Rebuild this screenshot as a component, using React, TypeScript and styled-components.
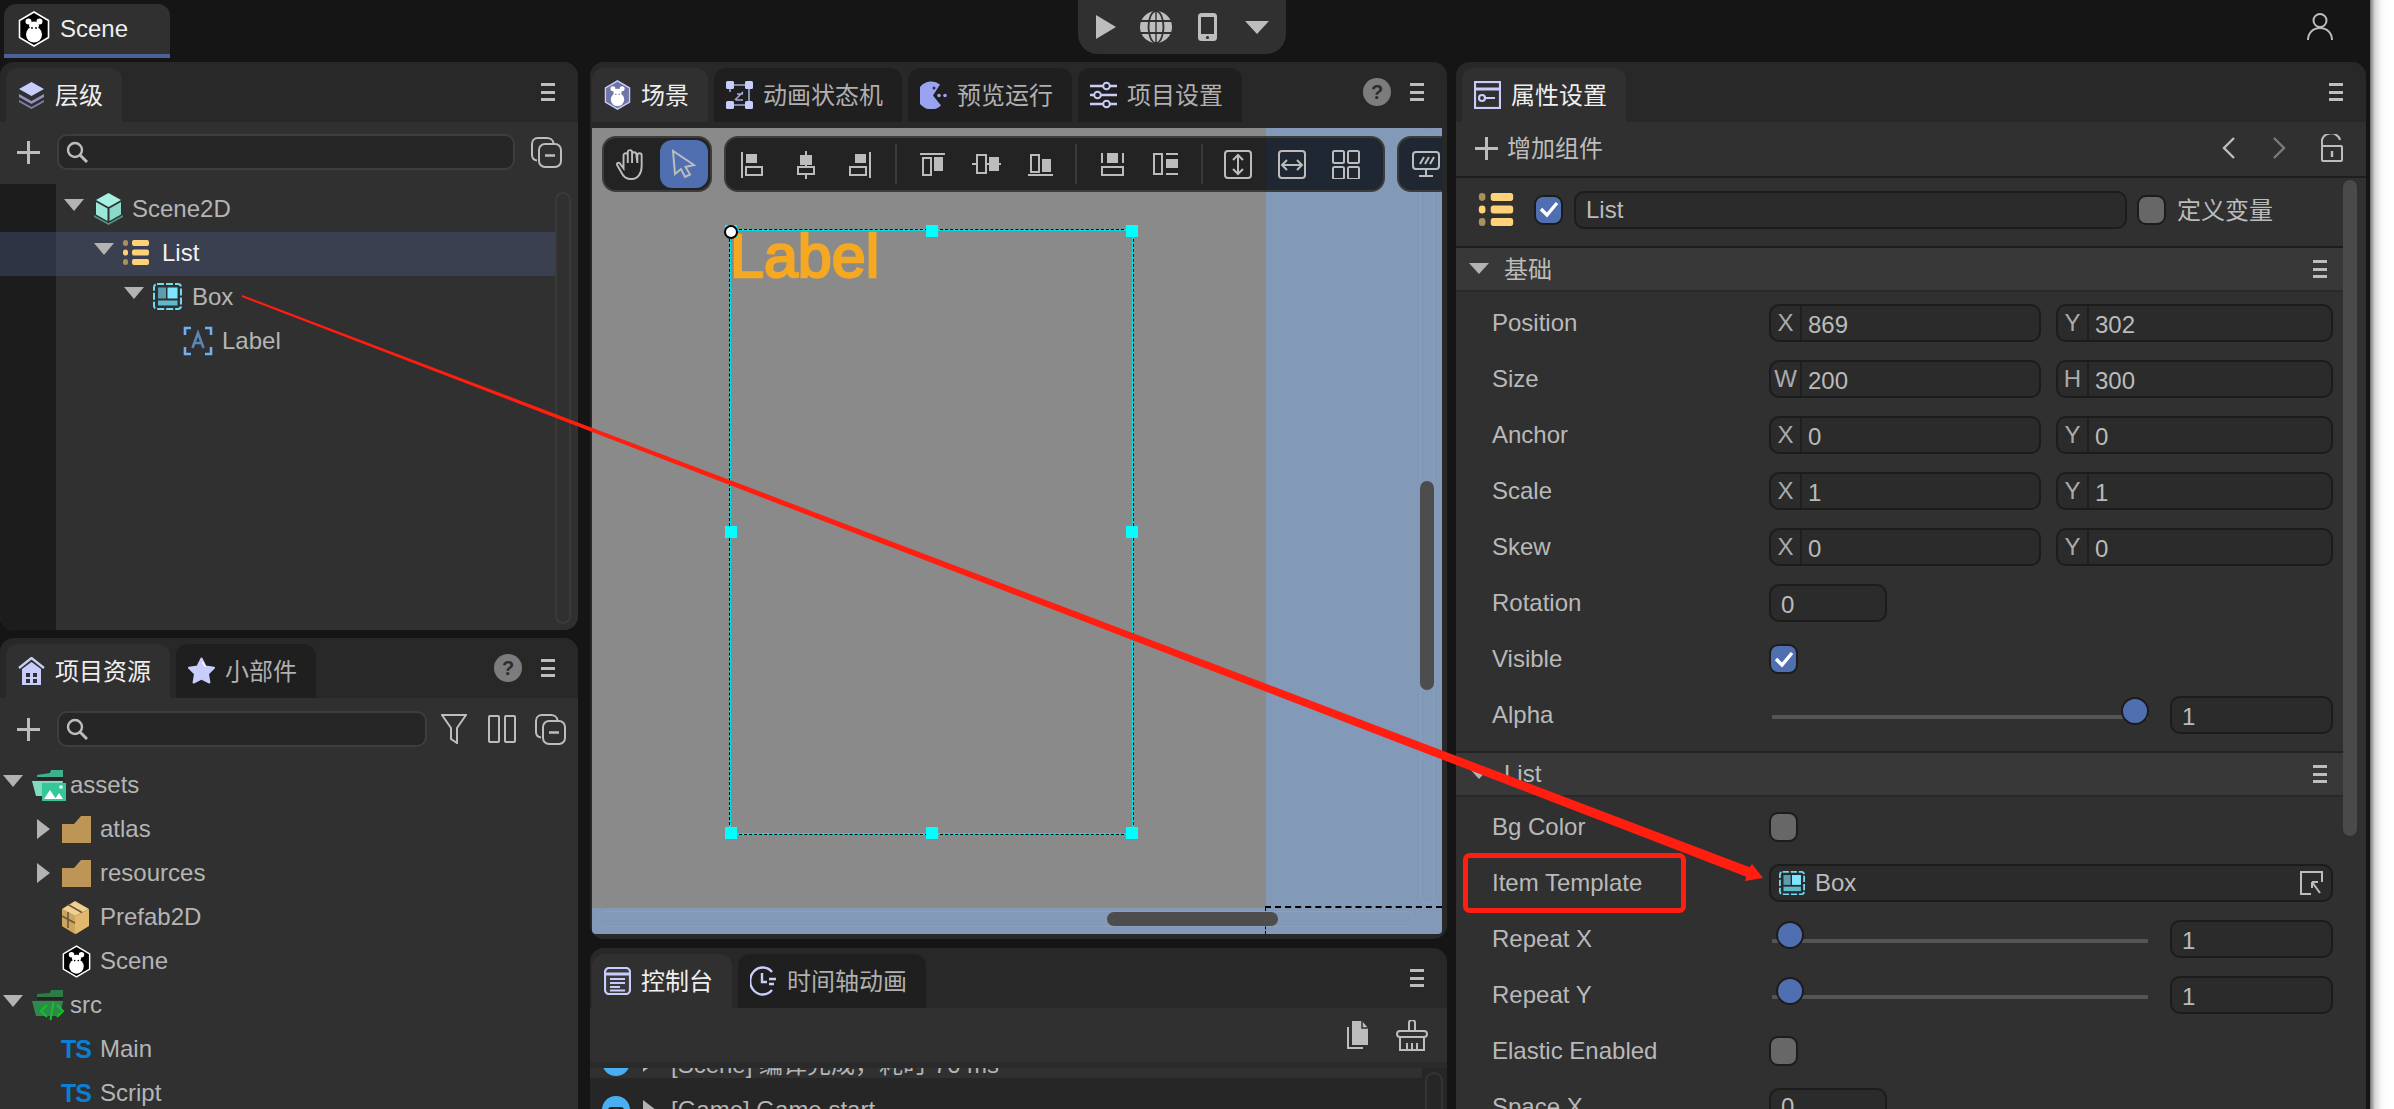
import React from 'react';
import styled, { createGlobalStyle } from 'styled-components';

const Global = createGlobalStyle`
  html, body { margin: 0; padding: 0; background: #fff; }
  body { font-family: "Liberation Sans", "Noto Sans CJK SC", sans-serif; font-size: 24px; }
  * { box-sizing: border-box; }
`;

const Root = styled.div`
  position: relative; width: 2394px; height: 1109px; overflow: hidden; display: flex;
`;
const Main = styled.div`
  width: 2370px; height: 1109px; background: #151515; display: flex; flex-direction: column;
`;
const Edge = styled.div`
  width: 24px; background: linear-gradient(90deg, #777 0, #d8d8d8 5px, #fafafa 12px, #fff 20px);
`;
const TopBar = styled.div`
  height: 62px; flex: none; display: grid; grid-template-columns: 1fr auto 1fr; padding: 0 10px 0 4px;
`;
const DocTab = styled.div`
  width: 166px; height: 54px; margin-top: 4px; display: flex; align-items: center; gap: 10px; padding: 0 0 0 14px;
  background: #303030; border-radius: 12px 12px 0 0; border-bottom: 4px solid #4a6299; color: #eee;
`;
const RunGroup = styled.div`
  width: 208px; height: 54px; background: #303030; border-radius: 0 0 20px 20px; display: flex; align-items: center; padding-left: 18px;
`;
const UserSlot = styled.div`
  justify-self: end; margin: 13px 27px 0 0;
`;
const Columns = styled.div`
  flex: 1; min-height: 0; display: flex; overflow: hidden;
`;
const Column = styled.div<{ $w: number; $mr: number; $gap: number }>`
  width: ${p => p.$w}px; margin-right: ${p => p.$mr}px; display: flex; flex-direction: column; gap: ${p => p.$gap}px; flex: none; height: 1060px;
`;
const Panel = styled.div<{ $h?: number }>`
  ${p => (p.$h ? `height: ${p.$h}px; flex: none;` : 'flex: 1; min-height: 0;')}
  background: #282828; border-radius: 14px; overflow: hidden; display: flex; flex-direction: column;
`;
const TabRow = styled.div<{ $pad: number }>`
  height: 60px; flex: none; display: flex; padding: 6px 23px 0 ${p => p.$pad}px; gap: 6px;
`;
const Tab = styled.div<{ $active?: boolean }>`
  height: 54px; display: flex; align-items: center; gap: 10px; padding: 0 19px 0 12px;
  border-radius: 12px 12px 0 0; white-space: nowrap;
  background: ${p => (p.$active ? '#303030' : '#1f1f1f')};
  color: ${p => (p.$active ? '#efefef' : '#b0b0b0')};
`;
const CjkText = styled.span`
  margin-bottom: 4px;
`;
const TabActions = styled.div`
  margin: -6px 0 0 auto; display: flex; align-items: center; gap: 19px;
`;
const Help = styled.div`
  width: 28px; height: 28px; border-radius: 50%; background: #7c7c7c; color: #2c2c2c; font-weight: 700; font-size: 20px;
  display: flex; align-items: center; justify-content: center;
`;
const MenuBars = styled.div`
  width: 14px; height: 18px; display: flex; flex-direction: column; justify-content: space-between;
  & > i { display: block; height: 3px; background: #bdbdbd; }
`;
const Body = styled.div`
  flex: 1; min-height: 0; background: #303030; display: flex; flex-direction: column;
`;
const SearchBar = styled.div<{ $pb?: number }>`
  height: 62px; flex: none; display: flex; align-items: center; padding: 0 0 ${p => p.$pb ?? 0}px 17px;
`;
const PlusSlot = styled.div`
  width: 40px; flex: none;
`;
const Search = styled.div<{ $w: number }>`
  width: ${p => p.$w}px; height: 36px; background: #262626; border: 2px solid #3d3d3d; border-radius: 10px;
  display: flex; align-items: center; padding-left: 7px; flex: none;
`;
const BarIcon = styled.div<{ $ml: number }>`
  margin-left: ${p => p.$ml}px; flex: none;
`;
const Tree = styled.div<{ $gutter?: boolean; $pt: number }>`
  position: relative; flex: 1; min-height: 0; overflow: hidden; padding-top: ${p => p.$pt}px;
  ${p => (p.$gutter ? 'background: linear-gradient(90deg, #1c1c1c 56px, transparent 56px);' : '')}
`;
const TreeRail = styled.div`
  position: absolute; right: 7px; top: 8px; bottom: 6px; width: 16px; border: 2px solid #3a3a3a; border-radius: 8px;
`;
const Row = styled.div<{ $indent: number; $selected?: boolean; $limit?: boolean; $lift?: boolean }>`
  height: 44px; display: flex; align-items: center; padding: 0 0 ${p => (p.$lift ? 3 : 0)}px ${p => p.$indent}px;
  color: ${p => (p.$selected ? '#f2f2f2' : '#b5b5b5')}; white-space: nowrap;
  ${p => (p.$limit ? 'width: 555px;' : '')}
  ${p => (p.$selected ? 'background: rgba(74, 90, 130, 0.4);' : '')}
`;
const ArrowSlot = styled.div`
  width: 30px; flex: none; display: flex; align-items: center;
`;
const IconSlot = styled.div<{ $w: number }>`
  width: ${p => p.$w}px; flex: none; display: flex; align-items: center;
`;
const TriDown = styled.i`
  display: block; width: 0; height: 0; border-left: 10px solid transparent; border-right: 10px solid transparent;
  border-top: 12px solid #b3b3b3; margin: -8px 0 0 1px;
`;
const TriRight = styled.i`
  display: block; width: 0; height: 0; border-top: 10px solid transparent; border-bottom: 10px solid transparent;
  border-left: 13px solid #b3b3b3; margin-left: 5px;
`;
const TsMark = styled.span`
  color: #0a7fd4; font-weight: 700; font-size: 25px; letter-spacing: -1px; margin-left: -1px;
`;
const Canvas = styled.div`
  position: relative; flex: 1; min-height: 0; margin: 6px 5px 5px 2px; background: #8299b8; overflow: hidden; border-radius: 0 0 4px 4px;
`;
const Stage = styled.div`
  position: absolute; left: 0; top: 0; width: 674px; height: 780px; background: #8a8a8a;
`;
const DashH = styled.div`
  position: absolute; left: 673px; right: 0; top: 778px; border-top: 2px dashed #000;
`;
const DashV = styled.div`
  position: absolute; left: 673px; top: 780px; bottom: 0; border-left: 1px dashed #000;
`;
const Selection = styled.div`
  position: absolute; left: 137px; top: 101px; width: 405px; height: 606px; border: 2px solid #00e0e0;
  &::after { content: ''; position: absolute; inset: -2px; border: 1px dashed #000; }
`;
const CanvasLabel = styled.div`
  position: absolute; left: -1px; top: -5px; font-size: 61px; line-height: 1; color: #f5a821; -webkit-text-stroke: 2.4px #f5a821;
`;
const Handle = styled.i<{ $x: number; $y: number }>`
  position: absolute; z-index: 1; width: 12px; height: 12px; background: #00ffff;
  left: calc(${p => p.$x}% - 6px); top: calc(${p => p.$y}% - 6px);
`;
const Pivot = styled.i`
  position: absolute; z-index: 2; left: -7px; top: -6px; width: 14px; height: 14px; border-radius: 50%; background: #fff; border: 2px solid #000;
`;
const ToolRow = styled.div`
  position: relative; display: flex; gap: 12px; padding: 8px 0 0 10px; width: 1000px;
`;
const ToolGroup = styled.div<{ $w: number; $stop?: number; $shift?: boolean }>`
  width: ${p => p.$w}px; height: 56px; flex: none; display: flex; align-items: center; border-radius: 14px;
  border: 2px solid #3c3c3c;
  background: ${p => (p.$stop === undefined ? '#232323' : `linear-gradient(90deg, #232323 ${p.$stop}px, #1f2733 ${p.$stop}px)`)};
  ${p => (p.$shift ? '& > :first-child { margin-left: -1px; }' : '')}
`;
const ToolBtn = styled.div<{ $w?: number; $active?: boolean }>`
  width: ${p => p.$w ?? 54}px; height: 48px; flex: none; display: flex; align-items: center; justify-content: center; border-radius: 12px;
  ${p => (p.$active ? 'background: #4f6fb0; margin-left: 2px;' : '')}
`;
const ToolSep = styled.i`
  display: block; width: 2px; height: 40px; margin: 0 8px; background: #3a3a3a; flex: none;
`;
const ToolSvg = styled.svg`
  width: 30px; height: 30px; display: block; fill: none; stroke: #bcbcbc; stroke-width: 2;
`;
const HandSvg = styled(ToolSvg)`
  width: 32px; height: 32px; stroke-width: 1.8;
`;
const VRail = styled.div`
  position: absolute; left: 828px; top: 6px; width: 14px; height: 770px; border: 1px solid rgba(255,255,255,0.07); border-radius: 8px;
`;
const VThumb = styled.div`
  position: absolute; left: 828px; top: 353px; width: 14px; height: 209px; background: #4d4d4d; border-radius: 7px;
`;
const HRail = styled.div`
  position: absolute; left: 5px; top: 783px; width: 817px; height: 16px; border: 1px solid rgba(255,255,255,0.07); border-radius: 8px;
`;
const HThumb = styled.div`
  position: absolute; left: 515px; top: 784px; width: 171px; height: 14px; background: #4d4d4d; border-radius: 7px;
`;
const LogBar = styled.div`
  height: 54px; flex: none; background: #303030; display: flex; align-items: center; justify-content: flex-end; gap: 28px; padding-right: 19px;
`;
const LogBand = styled.div`
  height: 6px; flex: none; background: #2a2a2a;
`;
const LogList = styled.div`
  position: relative; flex: 1; min-height: 0; background: #262626; overflow: hidden;
`;
const LogInner = styled.div`
  margin-top: -22px; display: flex; flex-direction: column; gap: 16px;
`;
const LogRow = styled.div<{ $on?: boolean }>`
  width: 832px; height: 32px; display: flex; align-items: center; padding-left: 12px; color: #b5b5b5; white-space: nowrap;
  ${p => (p.$on ? 'background: #303030;' : '')}
`;
const LogDot = styled.div`
  width: 28px; height: 28px; border-radius: 50%; background: #4aaef2; flex: none; display: flex; align-items: center; justify-content: center;
  & > i { display: block; width: 16px; height: 6px; background: #262626; border-radius: 3px; }
`;
const LogTri = styled.i`
  display: block; width: 0; height: 0; border-top: 10px solid transparent; border-bottom: 10px solid transparent; border-left: 13px solid #b3b3b3;
  margin: 0 15px 0 13px; flex: none;
`;
const LogRail = styled.div`
  position: absolute; left: 835px; top: 4px; width: 18px; height: 200px; border: 2px solid #333; border-radius: 9px;
`;
const InspectBar = styled.div`
  height: 54px; flex: none; background: #303030; display: flex; align-items: center; padding: 0 0 2px 19px; color: #bdbdbd; gap: 9px;
`;
const NavIcons = styled.div`
  margin-left: auto; display: flex; align-items: center;
`;
const NavSlot = styled.div<{ $w: number }>`
  width: ${p => p.$w}px; flex: none;
`;
const InspectBody = styled.div`
  flex: 1; min-height: 0; display: flex; background: #303030; border-top: 2px solid #1e1e1e;
`;
const InspectMain = styled.div`
  width: 887px; flex: none;
`;
const ScrollCol = styled.div`
  width: 23px; flex: none;
`;
const ScrollThumb = styled.div`
  width: 14px; height: 656px; margin-top: 2px; background: #4a4a4a; border-radius: 7px;
`;
const NameRow = styled.div`
  height: 70px; display: flex; align-items: center; padding: 0 0 5px 22px; border-bottom: 2px solid #1e1e1e;
`;
const Check = styled.div<{ $on?: boolean }>`
  width: 29px; height: 30px; flex: none; border-radius: 9px; border: 2px solid #1c1c1c;
  background: ${p => (p.$on ? '#4f6fb0' : '#676767')};
  display: flex; align-items: center; justify-content: center;
`;
const NameCheck = styled.div`
  margin-left: 20px; margin-right: 11px;
`;
const NameInput = styled.div`
  width: 553px; height: 38px; background: #2b2b2b; border: 2px solid #1c1c1c; border-radius: 10px; display: flex; align-items: center; padding-left: 10px; color: #bbb;
`;
const VarCheck = styled.div`
  margin: 0 11px 0 10px;
`;
const VarText = styled.div`
  color: #bbb; margin-bottom: 2px;
`;
const Section = styled.div<{ $top?: boolean }>`
  height: ${p => (p.$top ? 46 : 44)}px; background: #383838; border-bottom: 2px solid #292929;
  ${p => (p.$top ? 'border-top: 2px solid #232323;' : '')}
  display: flex; align-items: center; padding: 0 16px 0 13px; color: #bbb; gap: 15px;
  & > ${MenuBars} { margin-left: auto; }
`;
const SectionTri = styled.i`
  display: block; width: 0; height: 0; border-left: 10px solid transparent; border-right: 10px solid transparent; border-top: 11px solid #b3b3b3; margin-top: -2px;
`;
const Props = styled.div<{ $pt: number }>`
  padding-top: ${p => p.$pt}px;
`;
const PropRow = styled.div`
  height: 56px; display: flex; align-items: center; padding-left: 36px; color: #b9b9b9; white-space: nowrap;
`;
const PropLabel = styled.div`
  width: 277px; flex: none;
`;
const Vec = styled.div`
  display: grid; grid-template-columns: 272px 277px; gap: 15px;
`;
const Field = styled.div<{ $w?: number; $pl?: number }>`
  height: 38px; ${p => (p.$w ? `width: ${p.$w}px; flex: none;` : '')} background: #2b2b2b; border: 2px solid #1c1c1c; border-radius: 10px;
  display: flex; align-items: center; color: #bbb; padding-left: ${p => p.$pl ?? 0}px;
`;
const FieldValue = styled.span`
  margin-top: 3px;
`;
const Prefix = styled.div`
  width: 31px; height: 100%; flex: none; border-right: 2px solid #1f1f1f; text-align: center; line-height: 34px; margin-right: 6px; color: #aaa;
`;
const Slider = styled.div`
  position: relative; width: 376px; height: 4px; margin: 4px 22px 0 3px; background: #555; flex: none;
`;
const Thumb = styled.i<{ $x: number }>`
  position: absolute; left: ${p => p.$x - 14}px; top: -18px; width: 28px; height: 28px; border-radius: 50%; background: #4f6fb0; border: 2px solid #1c1c1c;
`;
const RefIcon = styled.div`
  margin: 0 8px 0 auto; display: flex;
`;
const RefName = styled.div`
  margin-left: 10px;
`;
const Overlay = styled.svg`
  position: absolute; left: 0; top: 0; width: 2394px; height: 1109px; pointer-events: none;
`;

/* ---------- icons ---------- */
const Monkey = ({ w = 32, h = 36, hex = '#000', line = '#fff', body = '#fff' }: { w?: number; h?: number; hex?: string; line?: string; body?: string }) => (
  <svg width={w} height={h} viewBox="0 0 32 36" style={{ display: 'block', flex: 'none' }}>
    <polygon points="16,1 30.5,9.5 30.5,26.5 16,35 1.5,26.5 1.5,9.5" fill={hex} stroke={line} strokeWidth="1.6" />
    <circle cx="16" cy="23.5" r="8" fill={body} />
    <ellipse cx="16" cy="14.5" rx="5" ry="4" fill={body} />
    <circle cx="10.5" cy="10.5" r="3" fill={body} />
    <circle cx="21.5" cy="10.5" r="3" fill={body} />
    <circle cx="14" cy="17" r="0.9" fill={hex} />
    <circle cx="18" cy="17" r="0.9" fill={hex} />
  </svg>
);
const Layers = () => (
  <svg width="27" height="28" viewBox="0 0 27 28" style={{ display: 'block' }}>
    <path d="M13.5 1 26 8 13.5 15 1 8Z" fill="#c9cdfb" />
    <path d="M1 13l12.5 7L26 13v3l-12.5 7L1 16Z" fill="#8f92c0" />
    <path d="M1 19l12.5 7L26 19v2l-12.5 7L1 21Z" fill="#7f82ad" />
  </svg>
);
const MenuIcon = () => (<MenuBars><i /><i /><i /></MenuBars>);
const Plus = () => (
  <svg width="23" height="23" viewBox="0 0 23 23" style={{ display: 'block' }}>
    <path d="M11.5 0v23M0 11.5h23" stroke="#bdbdbd" strokeWidth="3" />
  </svg>
);
const Mag = () => (
  <svg width="22" height="22" viewBox="0 0 22 22" fill="none" stroke="#bdbdbd" strokeWidth="2.4" style={{ display: 'block' }}>
    <circle cx="9" cy="9" r="7" /><path d="M14 14l7 7" strokeWidth="3" />
  </svg>
);
const CopyMinus = () => (
  <svg width="31" height="31" viewBox="0 0 31 31" fill="none" stroke="#bdbdbd" strokeWidth="2" style={{ display: 'block' }}>
    <path d="M6 23.5C3 23 1 21 1 18V7c0-3 2-6 6-6h9c3 0 6 2 6.5 5" />
    <rect x="8" y="7" width="22" height="23" rx="6" /><path d="M14 18.5h10" strokeWidth="2.4" />
  </svg>
);
const Cube = () => (
  <svg width="31" height="32" viewBox="0 0 31 32" style={{ display: 'block' }}>
    <path d="M1 22l14.5 8L30 22v2l-14.5 8L1 24Z" fill="#4e8f86" />
    <path d="M15.5 0 28 7 15.5 14 3 7Z" fill="#a6f0e2" />
    <path d="M3 9l11.5 6.5V28L3 21.5Z" fill="#9be8da" />
    <path d="M28 9l-11.5 6.5V28L28 21.5Z" fill="#8ad9cb" />
  </svg>
);
const ListIcon = ({ w = 26, h = 25 }: { w?: number; h?: number }) => (
  <svg width={w} height={h} viewBox="0 0 26 25" style={{ display: 'block', flex: 'none' }}>
    <rect x="0" y="0" width="5" height="6" rx="2.5" fill="#a8915a" />
    <rect x="9" y="0" width="17" height="6" rx="2" fill="#ffd27a" />
    <rect x="0" y="9.5" width="5" height="6" rx="2.5" fill="#ffd27a" />
    <rect x="9" y="9.5" width="17" height="6" rx="2" fill="#ffd27a" />
    <rect x="0" y="19" width="5" height="6" rx="2.5" fill="#a8915a" />
    <rect x="9" y="19" width="17" height="6" rx="2" fill="#ffd27a" />
  </svg>
);
const BoxIcon = ({ s = 29 }: { s?: number }) => (
  <svg width={s} height={s * 0.93} viewBox="0 0 29 27" style={{ display: 'block', flex: 'none' }}>
    <rect x="1" y="1" width="27" height="25" rx="3" fill="none" stroke="#6fdcf0" strokeWidth="2" strokeDasharray="7 2" />
    <rect x="5" y="4.5" width="8" height="11" fill="#5a9fb0" />
    <rect x="14.5" y="4.5" width="10" height="11" fill="#7ee6ff" />
    <rect x="5" y="17.5" width="19.5" height="5" fill="#5fb8cc" />
  </svg>
);
const LabelIcon = () => (
  <svg width="30" height="30" viewBox="0 0 30 30" style={{ display: 'block' }}>
    <path d="M8 2H2v7M22 2h6v7M8 28H2v-7M22 28h6v-7" fill="none" stroke="#6fb0f0" strokeWidth="2.6" />
    <path d="M9.5 22 15 7l5.5 15M11.5 17h7" fill="none" stroke="#5c86b5" strokeWidth="2.6" />
  </svg>
);
const AssetFolder = () => (
  <svg width="34" height="32" viewBox="0 0 34 32" style={{ display: 'block' }}>
    <path d="M5 6 18 4l1-3h12v10H5Z" fill="#3cb08f" />
    <path d="M5 8h26v3H5Z" fill="#252525" />
    <path d="M0 12h31l-3 15H4Z" fill="#7fdcc0" />
    <rect x="10" y="14" width="24" height="18" fill="#33c79a" />
    <path d="M12 30l6-9 6 9Zm11 0 4-6 4 6Z" fill="#fff" />
    <circle cx="29" cy="18" r="1.8" fill="#fff" />
  </svg>
);
const SrcFolder = () => (
  <svg width="34" height="32" viewBox="0 0 34 32" style={{ display: 'block' }}>
    <path d="M5 5 18 4l1-3h12v10H5Z" fill="#2c7d45" />
    <path d="M5 8h26v3H5Z" fill="#252525" />
    <path d="M0 12h31l-3 15H4Z" fill="#2e8a4c" />
    <path d="M15 16l-6 6 6 6M25 16l6 6-6 6M21.5 13l-3 18" fill="none" stroke="#12c41d" strokeWidth="2" />
  </svg>
);
const Folder = () => (
  <svg width="29" height="27" viewBox="0 0 29 27" style={{ display: 'block' }}>
    <path d="M0 8h12l7-8h10v27H0Z" fill="#bd9657" />
  </svg>
);
const Prefab = () => (
  <svg width="27" height="33" viewBox="0 0 27 33" style={{ display: 'block' }}>
    <path d="M13 0 27 8 13 15 0 8Z" fill="#f0d090" />
    <path d="M0 8l13 7 14-7v17l-13 8-14-8Z" fill="#e0b870" />
    <path d="M0 8l13 7v18L0 25Z" fill="#cfa45e" />
    <path d="M6 3.5l14 8M6 11v16M0 15l13 7" stroke="#6b5a3a" strokeWidth="1.6" fill="none" />
  </svg>
);
const House = () => (
  <svg width="27" height="28" viewBox="0 0 27 28" style={{ display: 'block' }}>
    <path d="M1 11 13.5 1 26 11" fill="none" stroke="#c9cdfb" strokeWidth="2.4" />
    <path d="M4 12 13.5 5 23 12v16H4Z" fill="#c9cdfb" />
    <path d="M8 16h4v4H8zM15 16h4v4h-4zM8 22h4v4H8zM15 22h4v4h-4z" fill="#303030" />
  </svg>
);
const Star = () => (
  <svg width="27" height="28" viewBox="0 0 27 28" style={{ display: 'block' }}>
    <path d="M13.5 1.5 17.5 9.5l8.5 1.2-6 6.2 1.4 8.6-7.9-4-7.9 4L7 16.9 1 10.7l8.5-1.2Z" fill="#c9cdfb" stroke="#c9cdfb" strokeWidth="2" strokeLinejoin="round" />
    <path d="M14.5 5l3 5" stroke="#fff" strokeWidth="1.4" />
  </svg>
);
const Filter = () => (
  <svg width="26" height="30" viewBox="0 0 26 30" fill="none" stroke="#bdbdbd" strokeWidth="2" style={{ display: 'block' }}>
    <path d="M1 1h24L16 14v15l-6-4V14Z" />
  </svg>
);
const Split = () => (
  <svg width="28" height="28" viewBox="0 0 28 28" fill="none" stroke="#bdbdbd" strokeWidth="2" style={{ display: 'block' }}>
    <rect x="1" y="1" width="10" height="26" rx="1" /><rect x="17" y="1" width="10" height="26" rx="1" />
  </svg>
);
const Graph = () => (
  <svg width="27" height="28" viewBox="0 0 27 28" style={{ display: 'block' }}>
    <g fill="#c9cdfb"><rect x="0" y="0" width="8" height="8" rx="1.5" /><rect x="19" y="0" width="8" height="8" rx="1.5" /><rect x="0" y="20" width="8" height="8" rx="1.5" /><rect x="19" y="20" width="8" height="8" rx="1.5" /></g>
    <path d="M8 4h11M8 24h11M23 8v12M4 8v3M9 19l8-8M11 13h6M10 19h7" fill="none" stroke="#a4a8d8" strokeWidth="1.6" />
  </svg>
);
const Pacman = () => (
  <svg width="27" height="28" viewBox="0 0 27 28" style={{ display: 'block' }}>
    <path d="M20 3.5A14 14 0 1 0 21 24.5L13 14.5Z" fill="#9aa2f2" />
    <circle cx="19" cy="14.5" r="1.8" fill="#9aa2f2" /><circle cx="25" cy="14.5" r="1.8" fill="#9aa2f2" />
    <circle cx="14" cy="7" r="1.5" fill="#303030" />
  </svg>
);
const SliderSet = () => (
  <svg width="27" height="28" viewBox="0 0 27 28" fill="none" stroke="#c9cdfb" strokeWidth="2.4" style={{ display: 'block' }}>
    <path d="M0 5h13M20 5h7M0 14h4M11 14h16M0 23h13M20 23h7" />
    <circle cx="16.5" cy="5" r="3.3" strokeWidth="2" /><circle cx="7.5" cy="14" r="3.3" strokeWidth="2" /><circle cx="16.5" cy="23" r="3.3" strokeWidth="2" />
  </svg>
);
const Console = () => (
  <svg width="27" height="28" viewBox="0 0 27 28" style={{ display: 'block' }}>
    <rect x="1" y="1" width="25" height="26" rx="4" fill="#3a3a3a" stroke="#c9cdfb" strokeWidth="2.2" />
    <path d="M1 7h25" stroke="#c9cdfb" strokeWidth="3" />
    <path d="M6 12h15M6 16h15M6 20h10M6 23.5h15" stroke="#c9cdfb" strokeWidth="2" />
  </svg>
);
const Clock = () => (
  <svg width="27" height="30" viewBox="0 0 27 30" fill="none" stroke="#c9cdfb" strokeWidth="2.4" style={{ display: 'block' }}>
    <path d="M22 6A12.5 13.5 0 1 0 22 24" />
    <path d="M12 7v9h5M19 13h7M19 18h5" />
  </svg>
);
const PanelIcon = () => (
  <svg width="27" height="28" viewBox="0 0 27 28" fill="none" stroke="#c9cdfb" strokeWidth="2.2" style={{ display: 'block' }}>
    <rect x="1" y="1" width="25" height="26" />
    <path d="M1 8h25" strokeWidth="3" /><circle cx="8" cy="17" r="3" /><path d="M11 17h10" />
  </svg>
);
const Tick = () => (
  <svg width="20" height="17" viewBox="0 0 20 17" fill="none" stroke="#fff" strokeWidth="3.4" style={{ display: 'block' }}>
    <path d="M2 8l6 6L18 2" />
  </svg>
);
const Play = () => (
  <svg width="20" height="24" viewBox="0 0 20 24" style={{ display: 'block' }}><path d="M0 0 20 12 0 24Z" fill="#bdbdbd" /></svg>
);
const Globe = () => (
  <svg width="32" height="32" viewBox="0 0 32 32" style={{ display: 'block' }}>
    <circle cx="16" cy="16" r="16" fill="#bdbdbd" />
    <ellipse cx="16" cy="16" rx="7.5" ry="16" fill="none" stroke="#303030" strokeWidth="1.8" />
    <path d="M0 10h32M0 22h32" stroke="#303030" strokeWidth="1.8" /><path d="M16 0v32" stroke="#303030" strokeWidth="1.4" />
  </svg>
);
const Phone = () => (
  <svg width="19" height="28" viewBox="0 0 19 28" style={{ display: 'block' }}>
    <rect width="19" height="28" rx="3.5" fill="#bdbdbd" /><rect x="3" y="4" width="13" height="17" fill="#303030" /><circle cx="9.5" cy="24.5" r="1.6" fill="#303030" />
  </svg>
);
const Caret = () => (
  <svg width="24" height="13" viewBox="0 0 24 13" style={{ display: 'block' }}><path d="M0 0h24L12 13Z" fill="#bdbdbd" /></svg>
);
const User = () => (
  <svg width="26" height="27" viewBox="0 0 26 27" fill="none" stroke="#bdbdbd" strokeWidth="2" style={{ display: 'block' }}>
    <circle cx="13" cy="7.5" r="6.5" /><path d="M1 27c0-7 5-12 12-12s12 5 12 12" />
  </svg>
);
const Chev = ({ dir, color }: { dir: 'l' | 'r'; color: string }) => (
  <svg width="13" height="22" viewBox="0 0 13 22" fill="none" stroke={color} strokeWidth="2.4" style={{ display: 'block' }}>
    <path d={dir === 'l' ? 'M12 1 2 11l10 10' : 'M1 1l10 10L1 21'} />
  </svg>
);
const Lock = () => (
  <svg width="22" height="28" viewBox="0 0 22 28" fill="none" stroke="#bdbdbd" strokeWidth="2" style={{ display: 'block' }}>
    <path d="M1 12V9a9 8 0 0 1 18-3" /><rect x="1" y="12" width="20" height="15" rx="1" /><path d="M11 17v6" strokeWidth="2.4" />
  </svg>
);
const CopyFile = () => (
  <svg width="22" height="28" viewBox="0 0 22 28" style={{ display: 'block' }}>
    <path d="M6 0h10l6 7v17H6Z" fill="#bdbdbd" /><path d="M16 0v7h6" fill="none" stroke="#303030" strokeWidth="1.5" />
    <path d="M2 6v21h15" fill="none" stroke="#bdbdbd" strokeWidth="2" />
  </svg>
);
const Broom = () => (
  <svg width="32" height="31" viewBox="0 0 32 31" fill="none" stroke="#bdbdbd" strokeWidth="2" style={{ display: 'block' }}>
    <path d="M13 11V3a3 3 0 0 1 6 0v8" /><rect x="1" y="11" width="30" height="6" rx="3" />
    <path d="M4 17v13h24V17M11 23v7M16 23v7M21 23v7" />
  </svg>
);
const RefPick = () => (
  <svg width="23" height="24" viewBox="0 0 23 24" fill="none" stroke="#bdbdbd" strokeWidth="2" style={{ display: 'block' }}>
    <path d="M22 11V1H1v22h10" /><path d="M12 11l8 11M12 11v6M12 11h6" />
  </svg>
);

const T = ({ children }: { children: React.ReactNode }) => <ToolSvg viewBox="0 0 30 30">{children}</ToolSvg>;
const F = { fill: '#bcbcbc', stroke: 'none' };
const tools1 = [
  <T key="a"><path d="M5 3v26" /><rect x="9" y="5" width="11" height="9" {...F} /><rect x="9" y="18" width="16" height="8" /></T>,
  <T key="b"><path d="M15 2v28" /><rect x="9" y="6" width="12" height="10" {...F} /><rect x="7" y="18" width="16" height="7" fill="#232323" /></T>,
  <T key="c"><path d="M25 3v26" /><rect x="10" y="5" width="11" height="9" {...F} /><rect x="5" y="18" width="16" height="8" /></T>,
];
const tools2 = [
  <T key="a"><path d="M3 5h25" /><rect x="6" y="9" width="8" height="17" /><rect x="17" y="8" width="9" height="14" {...F} /></T>,
  <T key="b"><path d="M1 15h29" /><rect x="6" y="6" width="9" height="18" fill="#232323" /><rect x="18" y="8" width="10" height="14" {...F} /></T>,
  <T key="c"><path d="M3 26h25" /><rect x="6" y="6" width="8" height="17" /><rect x="17" y="10" width="9" height="13" {...F} /></T>,
];
const tools3 = [
  <T key="a"><path d="M5 4v10M26 4v10" /><rect x="10" y="4" width="11" height="10" {...F} /><rect x="5" y="18" width="21" height="8" /></T>,
  <T key="b"><rect x="3" y="5" width="8" height="20" /><path d="M15 5h12M15 25h12" /><rect x="15" y="10" width="12" height="9" {...F} /></T>,
];
const tools4 = [
  <T key="a"><rect x="2" y="2" width="26" height="27" rx="3" /><path d="M15 6v19M10 11l5-5 5 5M10 20l5 5 5-5" /></T>,
  <T key="b"><rect x="2" y="2" width="26" height="27" rx="3" /><path d="M5 16h20M10 11l-5 5 5 5M20 11l5 5-5 5" /></T>,
  <T key="c"><rect x="2" y="2" width="11" height="12" rx="1.5" /><rect x="17" y="2" width="11" height="12" rx="1.5" /><rect x="2" y="18" width="11" height="12" rx="1.5" /><rect x="17" y="18" width="11" height="12" rx="1.5" /></T>,
];

const handles: [number, number][] = [[0, 0], [50, 0], [100, 0], [0, 50], [100, 50], [0, 100], [50, 100], [100, 100]];
const vecs = [
  ['Position', 'X', '869', 'Y', '302'],
  ['Size', 'W', '200', 'H', '300'],
  ['Anchor', 'X', '0', 'Y', '0'],
  ['Scale', 'X', '1', 'Y', '1'],
  ['Skew', 'X', '0', 'Y', '0'],
];

const Tabs = ({ pad, items, help }: { pad: number; items: { icon: React.ReactNode; text: string; active?: boolean }[]; help?: boolean }) => (
  <TabRow $pad={pad}>
    {items.map(i => (
      <Tab key={i.text} $active={i.active}>{i.icon}<CjkText>{i.text}</CjkText></Tab>
    ))}
    <TabActions>
      {help && <Help>?</Help>}
      <MenuIcon />
    </TabActions>
  </TabRow>
);

const SliderField = ({ x }: { x: number }) => (
  <>
    <Slider><Thumb $x={x} /></Slider>
    <Field $w={163} $pl={10}><FieldValue>1</FieldValue></Field>
  </>
);

export default function App() {
  return (
    <Root>
      <Global />
      <Main>
        <TopBar>
          <div>
            <DocTab><Monkey />Scene</DocTab>
          </div>
          <RunGroup>
            <Play />
            <BarIcon $ml={24}><Globe /></BarIcon>
            <BarIcon $ml={26}><Phone /></BarIcon>
            <BarIcon $ml={28}><Caret /></BarIcon>
          </RunGroup>
          <UserSlot><User /></UserSlot>
        </TopBar>
        <Columns>
          <Column $w={578} $mr={12} $gap={8}>
            <Panel $h={568}>
              <Tabs pad={6} items={[{ icon: <Layers />, text: '层级', active: true }]} />
              <Body>
                <SearchBar $pb={2}>
                  <PlusSlot><Plus /></PlusSlot>
                  <Search $w={458}><Mag /></Search>
                  <BarIcon $ml={16}><CopyMinus /></BarIcon>
                </SearchBar>
                <Tree $gutter $pt={4}>
                  <Row $lift $indent={63}><ArrowSlot><TriDown /></ArrowSlot><IconSlot $w={39}><Cube /></IconSlot>Scene2D</Row>
                  <Row $lift $indent={93} $selected $limit><ArrowSlot><TriDown /></ArrowSlot><IconSlot $w={39}><ListIcon /></IconSlot>List</Row>
                  <Row $lift $indent={123}><ArrowSlot><TriDown /></ArrowSlot><IconSlot $w={39}><BoxIcon /></IconSlot>Box</Row>
                  <Row $lift $indent={153}><ArrowSlot /><IconSlot $w={39}><LabelIcon /></IconSlot>Label</Row>
                  <TreeRail />
                </Tree>
              </Body>
            </Panel>
            <Panel>
              <Tabs pad={6} help items={[{ icon: <House />, text: '项目资源', active: true }, { icon: <Star />, text: '小部件' }]} />
              <Body>
                <SearchBar>
                  <PlusSlot><Plus /></PlusSlot>
                  <Search $w={370}><Mag /></Search>
                  <BarIcon $ml={14}><Filter /></BarIcon>
                  <BarIcon $ml={21}><Split /></BarIcon>
                  <BarIcon $ml={19}><CopyMinus /></BarIcon>
                </SearchBar>
                <Tree $pt={3}>
                  <Row $indent={2}><ArrowSlot><TriDown /></ArrowSlot><IconSlot $w={38}><AssetFolder /></IconSlot>assets</Row>
                  <Row $indent={32}><ArrowSlot><TriRight /></ArrowSlot><IconSlot $w={38}><Folder /></IconSlot>atlas</Row>
                  <Row $indent={32}><ArrowSlot><TriRight /></ArrowSlot><IconSlot $w={38}><Folder /></IconSlot>resources</Row>
                  <Row $indent={32}><ArrowSlot /><IconSlot $w={38}><Prefab /></IconSlot>Prefab2D</Row>
                  <Row $indent={32}><ArrowSlot /><IconSlot $w={38}><Monkey w={29} h={33} /></IconSlot>Scene</Row>
                  <Row $indent={2}><ArrowSlot><TriDown /></ArrowSlot><IconSlot $w={38}><SrcFolder /></IconSlot>src</Row>
                  <Row $indent={32}><ArrowSlot /><IconSlot $w={38}><TsMark>TS</TsMark></IconSlot>Main</Row>
                  <Row $indent={32}><ArrowSlot /><IconSlot $w={38}><TsMark>TS</TsMark></IconSlot>Script</Row>
                </Tree>
              </Body>
            </Panel>
          </Column>

          <Column $w={857} $mr={9} $gap={9}>
            <Panel $h={877}>
              <Tabs pad={2} help items={[
                { icon: <Monkey w={27} h={30} hex="#6f75a8" line="#c9cdfb" />, text: '场景', active: true },
                { icon: <Graph />, text: '动画状态机' },
                { icon: <Pacman />, text: '预览运行' },
                { icon: <SliderSet />, text: '项目设置' },
              ]} />
              <Canvas>
                <Stage />
                <DashH />
                <DashV />
                <Selection>
                  <CanvasLabel>Label</CanvasLabel>
                  {handles.map(([x, y]) => <Handle key={`${x}-${y}`} $x={x} $y={y} />)}
                  <Pivot />
                </Selection>
                <VRail />
                <VThumb />
                <HRail />
                <HThumb />
                <ToolRow>
                  <ToolGroup $w={110}>
                    <ToolBtn>
                      <HandSvg viewBox="0 0 30 30">
                        <path d="M21 14V7a2 2 0 0 1 4 0v10c0 7-4 12-9 12h-2c-4 0-6-2-8-6l-4-7c-1-2 2-3 3-1l3 4V7a2 2 0 0 1 4 0v7-10a2 2 0 0 1 4 0v10-8a2 2 0 0 1 4 0z" />
                      </HandSvg>
                    </ToolBtn>
                    <ToolBtn $w={48} $active>
                      <T><path d="M4 2 6 25 12 20 16 28 21 25.5 16.5 18 25 16Z" /></T>
                    </ToolBtn>
                  </ToolGroup>
                  <ToolGroup $w={661} $stop={540} $shift>
                    {tools1.map((t, i) => <ToolBtn key={i}>{t}</ToolBtn>)}
                    <ToolSep />
                    {tools2.map((t, i) => <ToolBtn key={i}>{t}</ToolBtn>)}
                    <ToolSep />
                    {tools3.map((t, i) => <ToolBtn key={i}>{t}</ToolBtn>)}
                    <ToolSep />
                    {tools4.map((t, i) => <ToolBtn key={i}>{t}</ToolBtn>)}
                  </ToolGroup>
                  <ToolGroup $w={80} $stop={0}>
                    <ToolBtn>
                      <T><rect x="2" y="3" width="26" height="17" rx="3" /><path d="M15 20v6M8 27h14M9 15l4-7M14 15l4-7M19 15l4-7" /></T>
                    </ToolBtn>
                  </ToolGroup>
                </ToolRow>
              </Canvas>
            </Panel>
            <Panel>
              <Tabs pad={2} items={[{ icon: <Console />, text: '控制台', active: true }, { icon: <Clock />, text: '时间轴动画' }]} />
              <LogBar><CopyFile /><Broom /></LogBar>
              <LogBand />
              <LogList>
                <LogInner>
                  <LogRow $on><LogDot><i /></LogDot><LogTri />[Scene] 编译完成，耗时 76 ms</LogRow>
                  <LogRow><LogDot><i /></LogDot><LogTri />[Game] Game start</LogRow>
                </LogInner>
                <LogRail />
              </LogList>
            </Panel>
          </Column>

          <Column $w={910} $mr={0} $gap={0}>
            <Panel>
              <Tabs pad={6} items={[{ icon: <PanelIcon />, text: '属性设置', active: true }]} />
              <InspectBar>
                <Plus /><CjkText>增加组件</CjkText>
                <NavIcons>
                  <NavSlot $w={51}><Chev dir="l" color="#bdbdbd" /></NavSlot>
                  <NavSlot $w={48}><Chev dir="r" color="#7c7c7c" /></NavSlot>
                  <NavSlot $w={45}><Lock /></NavSlot>
                </NavIcons>
              </InspectBar>
              <InspectBody>
                <InspectMain>
                  <NameRow>
                    <ListIcon w={36} h={33} />
                    <NameCheck><Check $on><Tick /></Check></NameCheck>
                    <NameInput>List</NameInput>
                    <VarCheck><Check /></VarCheck>
                    <VarText>定义变量</VarText>
                  </NameRow>
                  <Section><SectionTri /><CjkText>基础</CjkText><MenuIcon /></Section>
                  <Props $pt={3}>
                    {vecs.map(([name, a, av, b, bv]) => (
                      <PropRow key={name}>
                        <PropLabel>{name}</PropLabel>
                        <Vec>
                          <Field><Prefix>{a}</Prefix><FieldValue>{av}</FieldValue></Field>
                          <Field><Prefix>{b}</Prefix><FieldValue>{bv}</FieldValue></Field>
                        </Vec>
                      </PropRow>
                    ))}
                    <PropRow><PropLabel>Rotation</PropLabel><Field $w={118} $pl={10}><FieldValue>0</FieldValue></Field></PropRow>
                    <PropRow><PropLabel>Visible</PropLabel><Check $on><Tick /></Check></PropRow>
                    <PropRow><PropLabel>Alpha</PropLabel><SliderField x={363} /></PropRow>
                  </Props>
                  <Props $pt={8}>
                    <Section $top><SectionTri />List<MenuIcon /></Section>
                  </Props>
                  <Props $pt={2}>
                    <PropRow><PropLabel>Bg Color</PropLabel><Check /></PropRow>
                    <PropRow>
                      <PropLabel>Item Template</PropLabel>
                      <Field $w={564} $pl={8}><BoxIcon s={26} /><RefName>Box</RefName><RefIcon><RefPick /></RefIcon></Field>
                    </PropRow>
                    <PropRow><PropLabel>Repeat X</PropLabel><SliderField x={18} /></PropRow>
                    <PropRow><PropLabel>Repeat Y</PropLabel><SliderField x={18} /></PropRow>
                    <PropRow><PropLabel>Elastic Enabled</PropLabel><Check /></PropRow>
                    <PropRow><PropLabel>Space X</PropLabel><Field $w={118} $pl={10}>0</Field></PropRow>
                  </Props>
                </InspectMain>
                <ScrollCol><ScrollThumb /></ScrollCol>
              </InspectBody>
            </Panel>
          </Column>
        </Columns>
      </Main>
      <Edge />
      <Overlay viewBox="0 0 2394 1109">
        <polygon points="242.4,295.1 1749.8,867.3 1752,864 1763,878 1745,881 1746.2,876.7 241.6,296.9" fill="#ff1e0f" />
        <rect x="1465.5" y="855.5" width="218" height="55" rx="4" fill="none" stroke="#ff1e0f" strokeWidth="5" />
      </Overlay>
    </Root>
  );
}
